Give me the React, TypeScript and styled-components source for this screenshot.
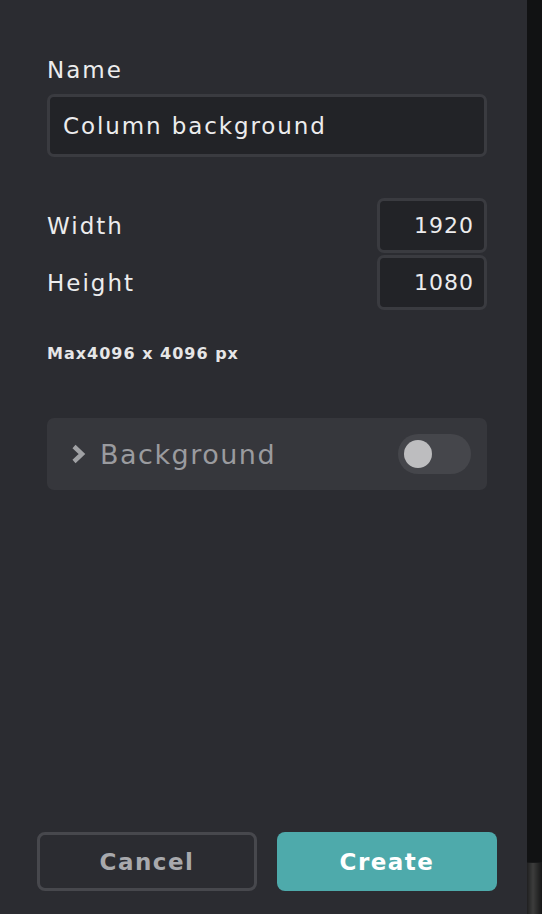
import React, { useState } from 'react';
import styled, { createGlobalStyle } from 'styled-components';

const GlobalStyle = createGlobalStyle`
  html, body {
    margin: 0;
    padding: 0;
    background: #111213;
  }
  * {
    box-sizing: border-box;
  }
`;

const Page = styled.div`
  display: flex;
  width: 542px;
  height: 914px;
  font-family: 'DejaVu Sans', 'Noto Sans', sans-serif;
`;

const Panel = styled.div`
  width: 527px;
  height: 100%;
  background: #2b2c31;
  display: flex;
  flex-direction: column;
  padding: 56px 40px 0 47px;
`;

const Strip = styled.div`
  flex: 1;
  display: flex;
  flex-direction: column;
  justify-content: flex-end;
  background: #111213;
`;

const StripEdge = styled.div`
  height: 52px;
  border-top: 1px solid #1d1e1f;
  background: linear-gradient(90deg, #2a2a2a 0%, #5a5a58 40%, #1a1a1a 100%);
  opacity: 0.6;
`;

const Label = styled.div`
  color: #ececed;
  font-size: 23px;
  line-height: 28px;
  letter-spacing: 2px;
`;

const TextInput = styled.input`
  margin-top: 10px;
  width: 100%;
  height: 63px;
  background: #222327;
  border: 3px solid #3a3b40;
  border-radius: 7px;
  color: #ececed;
  font-family: inherit;
  font-size: 23px;
  letter-spacing: 1.9px;
  padding: 0 13px;
  outline: none;
`;

const SizeRows = styled.div`
  margin-top: 41px;
  display: flex;
  flex-direction: column;
  gap: 2px;
`;

const SizeRow = styled.div`
  display: flex;
  align-items: center;
  justify-content: space-between;
`;

const NumberInput = styled.input`
  width: 110px;
  height: 55px;
  background: #222327;
  border: 3px solid #3a3b40;
  border-radius: 7px;
  color: #ececed;
  font-family: inherit;
  font-size: 22px;
  letter-spacing: 1px;
  text-align: right;
  padding: 0 10px;
  outline: none;
`;

const Hint = styled.div`
  margin-top: 33px;
  color: #e6e6e7;
  font-size: 16px;
  font-weight: 600;
  line-height: 22px;
  letter-spacing: 1px;
`;

const Collapse = styled.div`
  margin-top: 53px;
  height: 72px;
  background: #36373c;
  border-radius: 7px;
  display: flex;
  align-items: center;
  padding: 0 16px 0 21px;
`;

const Chevron = styled.svg`
  width: 20px;
  height: 24px;
  flex-shrink: 0;
`;

const CollapseTitle = styled.div`
  margin-left: 12px;
  flex: 1;
  color: #9a9b9f;
  font-size: 27px;
  letter-spacing: 1.5px;
`;

const Toggle = styled.button<{ $on: boolean }>`
  width: 73px;
  height: 40px;
  border: none;
  border-radius: 20px;
  background: ${(p) => (p.$on ? '#4eaaab' : '#45464b')};
  display: flex;
  align-items: center;
  justify-content: ${(p) => (p.$on ? 'flex-end' : 'flex-start')};
  padding: 0 6px;
  cursor: pointer;
`;

const Knob = styled.span`
  width: 28px;
  height: 28px;
  border-radius: 50%;
  background: #bdbdbf;
`;

const Footer = styled.div`
  margin-top: auto;
  margin-left: -10px;
  margin-right: -10px;
  margin-bottom: 23px;
  display: flex;
  gap: 20px;
`;

const Button = styled.button<{ $primary?: boolean }>`
  width: 220px;
  height: 59px;
  border-radius: 8px;
  font-family: inherit;
  font-size: 23px;
  font-weight: 700;
  letter-spacing: 1.5px;
  cursor: pointer;
  border: ${(p) => (p.$primary ? 'none' : '3px solid #47484d')};
  background: ${(p) => (p.$primary ? '#4eaaab' : 'transparent')};
  color: ${(p) => (p.$primary ? '#ffffff' : '#a8a9ad')};
`;

export default function App() {
  const [on, setOn] = useState(false);
  return (
    <Page>
      <GlobalStyle />
      <Panel>
        <Label>Name</Label>
        <TextInput defaultValue="Column background" />
        <SizeRows>
          <SizeRow>
            <Label>Width</Label>
            <NumberInput defaultValue="1920" />
          </SizeRow>
          <SizeRow>
            <Label>Height</Label>
            <NumberInput defaultValue="1080" />
          </SizeRow>
        </SizeRows>
        <Hint>Max4096 x 4096 px</Hint>
        <Collapse>
          <Chevron viewBox="0 0 20 24">
            <path d="M6 4.5 L14 12 L6 19.5" fill="none" stroke="#a0a1a4" strokeWidth="4.5" strokeLinejoin="miter" />
          </Chevron>
          <CollapseTitle>Background</CollapseTitle>
          <Toggle $on={on} onClick={() => setOn(!on)}>
            <Knob />
          </Toggle>
        </Collapse>
        <Footer>
          <Button>Cancel</Button>
          <Button $primary>Create</Button>
        </Footer>
      </Panel>
      <Strip>
        <StripEdge />
      </Strip>
    </Page>
  );
}
